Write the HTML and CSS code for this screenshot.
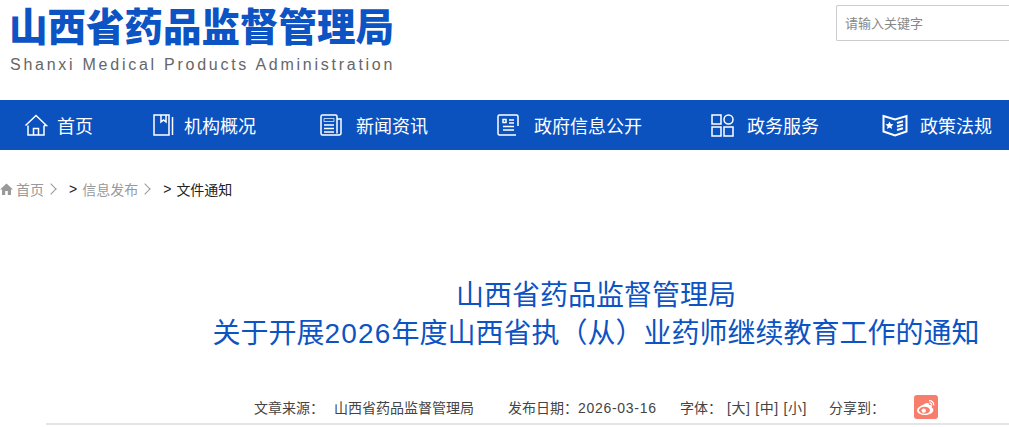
FILE: index.html
```html
<!DOCTYPE html>
<html lang="zh-CN">
<head>
<meta charset="utf-8">
<title>山西省药品监督管理局</title>
<link rel="stylesheet" href="styles.css">
</head>
<body>
<header class="top">
  <div class="logo">
    <div class="logo-cn">山西省药品监督管理局</div>
    <div class="logo-en">Shanxi Medical Products Administration</div>
  </div>
  <div class="search">请输入关键字</div>
</header>
<nav class="nav">
  <a class="nav-item w1"><svg class="ico" width="24" height="24" viewBox="0 0 24 24"><path d="M1.500 12.500 12 2.500l10.500 10-2.500 0M4 12.500V22h16V12.500M9.500 22v-6.500h5V22" /></svg><span>首页</span></a>
  <a class="nav-item w2"><svg class="ico" width="22" height="24" viewBox="0 0 22 24"><path d="M2 2h15v20H2zM9 2v7l2.500-2L14 9V2M20.500 4v18" /></svg><span>机构概况</span></a>
  <a class="nav-item w3"><svg class="ico" width="24" height="24" viewBox="0 0 24 24"><path d="M18 20.500V3.500A1.500 1.500 0 0 0 16.500 2h-13A1.500 1.500 0 0 0 2 3.500v17A1.500 1.500 0 0 0 3.500 22H20a2 2 0 0 0 2-2V6h-4M5 12h10M5 15.500h10M5 19h10" /><path class="thin" d="M5 5.500h10v3H5z" /></svg><span>新闻资讯</span></a>
  <a class="nav-item w4"><svg class="ico" width="24" height="24" viewBox="0 0 24 24"><path d="M22 13V3.500A1.500 1.500 0 0 0 20.500 2h-17A1.500 1.500 0 0 0 2 3.500v17A1.500 1.500 0 0 0 3.500 22H20M7 6.500h3v3H7zM13 7h5M13 10h5M7 13.500h11M7 17h11" /></svg><span>政府信息公开</span></a>
  <a class="nav-item w5"><svg class="ico" width="24" height="24" viewBox="0 0 24 24"><path d="M2 2h9v9H2zM2 14h9v9H2zM14 14h9v9h-9z" /><circle cx="18.500" cy="6.500" r="4.500" /></svg><span>政务服务</span></a>
  <a class="nav-item w6"><svg class="ico" width="26" height="24" viewBox="0 0 26 24"><path class="bold" d="M1.500 3 13 6.500 24.500 3v15.500L13 22.500 1.500 18.500z" /><path class="solid" d="m7.500 8.500 1.200 2.500 2.800.3-2 1.900.5 2.800-2.500-1.400-2.500 1.400.5-2.800-2-1.900 2.800-.3z" /><path class="bold" d="m15 10 6-1.800M15 13.500l6-1.800M15 17l6-1.800" /></svg><span>政策法规</span></a>
</nav>
<div class="crumbs">
  <svg class="home" width="13" height="12" viewBox="0 0 13 12"><path d="M6.500.5 0 6.500h2V12h3.200V8h2.600v4H11V6.500h2z" /></svg>
  <span class="crumb">首页</span><span class="chev"></span>
  <span class="gt">&gt;</span><span class="crumb">信息发布</span><span class="chev"></span>
  <span class="gt">&gt;</span><span class="cur">文件通知</span>
</div>
<main class="article">
  <h1 class="title">山西省药品监督管理局<br>关于开展<span class="num">2026</span>年度山西省执（从）业药师继续教育工作的通知</h1>
  <div class="meta">
    <span class="m-a">文章来源：</span>
    <span class="m-b">山西省药品监督管理局</span>
    <span class="m-c">发布日期：<span class="date">2026-03-16</span></span>
    <span class="m-d">字体：</span>
    <span class="m-e"><a>[大]</a><a>[中]</a><a>[小]</a></span>
    <span class="m-f">分享到：</span>
    <span class="weibo"><svg width="20" height="18" viewBox="0 0 20 18"><path class="wb" d="M8.200 6.200c2-1.500 4-1.700 4.600-.7.300.5.200 1.100 0 1.700 1.300-.4 3-.3 3.300.9.100.6 0 1.100-.5 1.700 1 .3 1.800 1 1.800 2.200 0 2.500-3.600 5-8.300 5C5 17 1 15 1 12.200 1 10.500 3.500 8 8.200 6.200z"/><ellipse class="wb-in" cx="8.500" cy="12.300" rx="5.500" ry="3.500"/><circle class="wb" cx="7.800" cy="12.600" r="2.200"/><path class="wb-line" d="M13 2.800c2.500-.5 5 1.500 4.700 4.600M13.500 5c1.200-.2 2.300.7 2.100 2.200"/></svg></span>
  </div>
</main>
</body>
</html>
```
FILE: styles.css
```css
* { box-sizing: border-box; }
html, body { margin: 0; padding: 0; }
body {
  width: 1009px;
  height: 427px;
  overflow: hidden;
  background: #fff;
  font-family: "Liberation Sans", "Noto Sans CJK SC", sans-serif;
  color: #333;
}
.top {
  height: 100px;
  display: flex;
  justify-content: space-between;
  padding: 5px 0 0 9px;
}
.logo-cn {
  font-family: "Liberation Sans", "Noto Sans CJK SC", sans-serif;
  font-weight: 900;
  font-size: 38.5px;
  line-height: 46px;
  color: #0c53c3;
  white-space: nowrap;
}
.logo-en {
  font-family: "Liberation Sans", sans-serif;
  font-size: 16px;
  line-height: 20px;
  letter-spacing: 2.74px;
  color: #666;
  margin-top: 4px;
  margin-left: 1px;
  white-space: nowrap;
}
.search {
  width: 173px;
  height: 36px;
  margin-top: 0;
  padding-left: 8px;
  border: 1px solid #ccc;
  border-right: 0;
  border-radius: 2px 0 0 2px;
  font-size: 13px;
  line-height: 36px;
  color: #888;
}
.nav {
  height: 50px;
  background: #0b52bf;
  display: flex;
  align-items: center;
  padding-left: 24px;
  color: #fff;
  font-size: 18px;
  white-space: nowrap;
}
.nav-item { display: flex; align-items: center; gap: 10px; flex: none; }
.w1 { width: 128px; gap: 9px; }
.w2 { width: 167px; }
.w3 { width: 177px; }
.w4 { width: 214px; }
.w5 { width: 172px; }
.w6 { gap: 12px; }
.ico { flex: none; fill: none; stroke: #fff; stroke-width: 1.500; }
.ico .thin { stroke-width: 1; opacity: .7; }
.ico .bold { stroke-width: 2; }
.ico .solid { fill: #fff; stroke: none; }
.w3 .ico { margin-right: 3px; }
.w4 .ico { margin-right: 4px; }
.w5 .ico { margin-right: 3px; }
.crumbs {
  display: flex;
  align-items: center;
  height: 20px;
  margin-top: 29px;
  font-size: 14px;
  color: #999;
  white-space: nowrap;
}
.home { fill: #999; margin-right: 3px; }
.chev {
  width: 8px;
  height: 8px;
  border-top: 1px solid #999;
  border-right: 1px solid #999;
  transform: rotate(45deg);
  margin: 0 14px 0 3px;
}
.gt { color: #222; margin-right: 5px; }
.cur { color: #222; }
.article {
  margin: 0 0 0 46px;
  border-bottom: 2px solid #e4e4e4;
  height: 226px;
}
.title {
  margin: 0;
  padding: 78px 0 0 137px;
  text-align: center;
  font-weight: 400;
  font-size: 28px;
  line-height: 38px;
  color: #0c53c3;
  white-space: nowrap;
}
.num { letter-spacing: 1.200px; }
.meta {
  display: flex;
  align-items: center;
  height: 26px;
  margin-top: 41px;
  padding-left: 208px;
  font-size: 14px;
  color: #444;
  white-space: nowrap;
}
.date { letter-spacing: .700px; }
.m-a { width: 80px; }
.m-b { width: 174px; }
.m-c { width: 172px; }
.m-d { width: 47px; }
.m-e { width: 102px; display: flex; gap: 5px; letter-spacing: .500px; }
.m-f { width: 85px; }
.m-e a { color: #444; }
.weibo {
  width: 24px;
  height: 24px;
  border-radius: 3px;
  background: #f77e6c;
  display: flex;
  align-items: center;
  justify-content: center;
}
.wb { fill: #fff; }
.wb-in { fill: #f77e6c; }
.wb-line { fill: none; stroke: #fff; stroke-width: 1.300; }
```
